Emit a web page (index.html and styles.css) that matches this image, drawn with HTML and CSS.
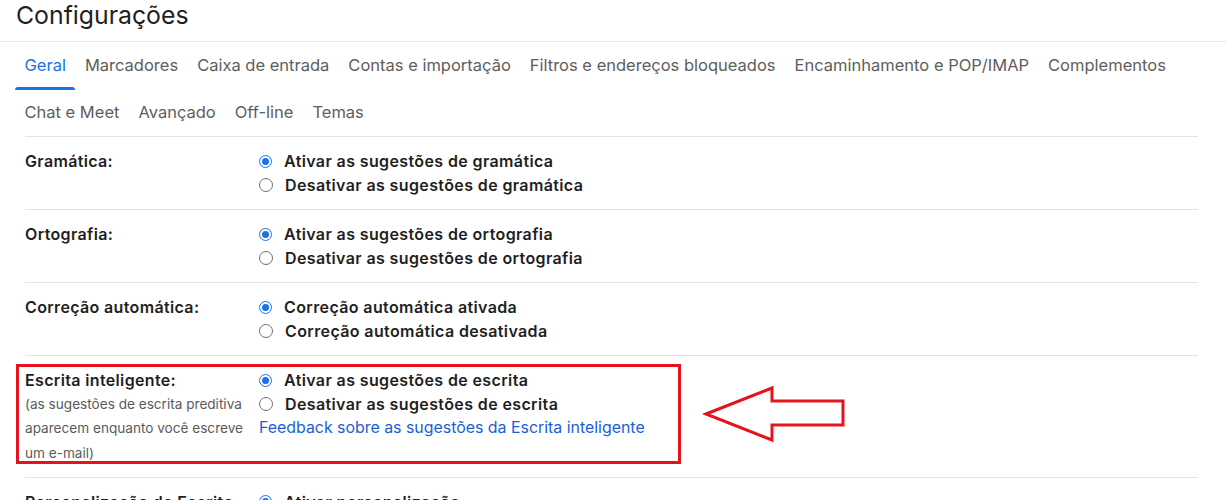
FILE: index.html
```html
<!DOCTYPE html>
<html lang="pt-BR">
<head>
<meta charset="utf-8">
<title>Configurações</title>
<link rel="stylesheet" href="styles.css">
</head>
<body>
<div class="page">
  <h1 class="title">Configurações</h1>
  <nav class="tabs">
    <span class="tab active">Geral</span>
    <span class="tab">Marcadores</span>
    <span class="tab">Caixa de entrada</span>
    <span class="tab">Contas e importação</span>
    <span class="tab">Filtros e endereços bloqueados</span>
    <span class="tab">Encaminhamento e POP/IMAP</span>
    <span class="tab">Complementos</span>
    <span class="tab">Chat e Meet</span>
    <span class="tab">Avançado</span>
    <span class="tab">Off-line</span>
    <span class="tab">Temas</span>
  </nav>
  <div class="settings">
    <div class="row">
      <div class="label"><span class="name">Gramática:</span></div>
      <div class="options">
        <label class="opt"><span class="radio checked"></span>Ativar as sugestões de gramática</label>
        <label class="opt"><span class="radio"></span>Desativar as sugestões de gramática</label>
      </div>
    </div>
    <div class="row">
      <div class="label"><span class="name">Ortografia:</span></div>
      <div class="options">
        <label class="opt"><span class="radio checked"></span>Ativar as sugestões de ortografia</label>
        <label class="opt"><span class="radio"></span>Desativar as sugestões de ortografia</label>
      </div>
    </div>
    <div class="row">
      <div class="label"><span class="name">Correção automática:</span></div>
      <div class="options">
        <label class="opt"><span class="radio checked"></span>Correção automática ativada</label>
        <label class="opt"><span class="radio"></span>Correção automática desativada</label>
      </div>
    </div>
    <div class="row">
      <div class="label">
        <span class="name">Escrita inteligente:</span>
        <span class="hint">(as sugestões de escrita preditiva aparecem enquanto você escreve um e-mail)</span>
      </div>
      <div class="options">
        <label class="opt"><span class="radio checked"></span>Ativar as sugestões de escrita</label>
        <label class="opt"><span class="radio"></span>Desativar as sugestões de escrita</label>
        <a class="link" href="#">Feedback sobre as sugestões da Escrita inteligente</a>
      </div>
      <div class="redbox"></div>
      <svg class="arrow" width="150" height="66" viewBox="0 0 150 66">
        <polygon points="6,33 72,7 72,20 143,20 143,44 72,44 72,59" fill="#fff" stroke="#e3141e" stroke-width="3" stroke-linejoin="miter"/>
      </svg>
    </div>
    <div class="row">
      <div class="label"><span class="name">Personalização de Escrita</span></div>
      <div class="options">
        <label class="opt"><span class="radio checked"></span>Ativar personalização</label>
      </div>
    </div>
  </div>
</div>
</body>
</html>
```
FILE: styles.css
```css
html, body {
  margin: 0;
  padding: 0;
  background: #fff;
  overflow: hidden;
}
.page {
  width: 1231px;
  height: 500px;
  overflow: hidden;
  font-family: Inter, "Open Sans", Arial, sans-serif;
}
.title {
  margin: 0 5px 0 0;
  height: 41px;
  padding-left: 16px;
  font-family: Inter, "Open Sans", Arial, sans-serif;
  font-weight: 400;
  font-size: 24.8px;
  line-height: 30px;
  color: #1f1f1f;
  border-bottom: 1px solid #e6e6e6;
}
.tabs {
  display: flex;
  flex-wrap: wrap;
  padding: 1px 30px 0 15px;
}
.tab {
  position: relative;
  padding: 0 9.5px;
  height: 47px;
  line-height: 44px;
  font-size: 16.5px;
  color: #5e5e5e;
  white-space: nowrap;
}
.tab:nth-child(n+8) {
  height: 46px;
}
.tab.active {
  color: #1a73e8;
}
.tab.active::after {
  content: "";
  position: absolute;
  left: 0;
  right: 0;
  bottom: 0;
  height: 3px;
  background: #1a73e8;
  border-radius: 3px 3px 0 0;
}
.settings {
  margin: 0 33px 0 25px;
  border-top: 1px solid #e3e3e3;
}
.row {
  position: relative;
  display: flex;
  padding: 12px 0;
  border-bottom: 1px solid #e3e3e3;
}
.label {
  width: 234px;
  flex: none;
  display: flex;
  flex-direction: column;
}
.name {
  font-weight: 600;
  font-size: 16px;
  letter-spacing: 0.35px;
  line-height: 24px;
  color: #1f1f1f;
}
.hint {
  font-size: 13.6px;
  line-height: 24.3px;
  color: #5a5a5a;
  width: 234px;
}
.options {
  display: flex;
  flex-direction: column;
}
.opt {
  display: flex;
  align-items: center;
  height: 24px;
  font-weight: 600;
  font-size: 16px;
  letter-spacing: 0.38px;
  color: #1f1f1f;
}
.radio {
  width: 12px;
  height: 12px;
  border: 1px solid #707070;
  border-radius: 50%;
  margin-right: 12px;
  box-sizing: content-box;
  flex: none;
  position: relative;
}
.radio.checked {
  border: 1.5px solid #1a73e8;
  width: 11px;
  height: 11px;
}
.radio.checked::after {
  content: "";
  position: absolute;
  left: 2px;
  top: 2px;
  width: 7px;
  height: 7px;
  border-radius: 50%;
  background: #1a73e8;
}
.link {
  font-size: 15.9px;
  line-height: 24px;
  color: #1a5fd6;
  text-decoration: none;
}
.redbox {
  position: absolute;
  left: -9px;
  top: 8px;
  width: 659px;
  height: 94px;
  border: 3px solid #e3141e;
  pointer-events: none;
}
.arrow {
  position: absolute;
  left: 675px;
  top: 25px;
}
```
